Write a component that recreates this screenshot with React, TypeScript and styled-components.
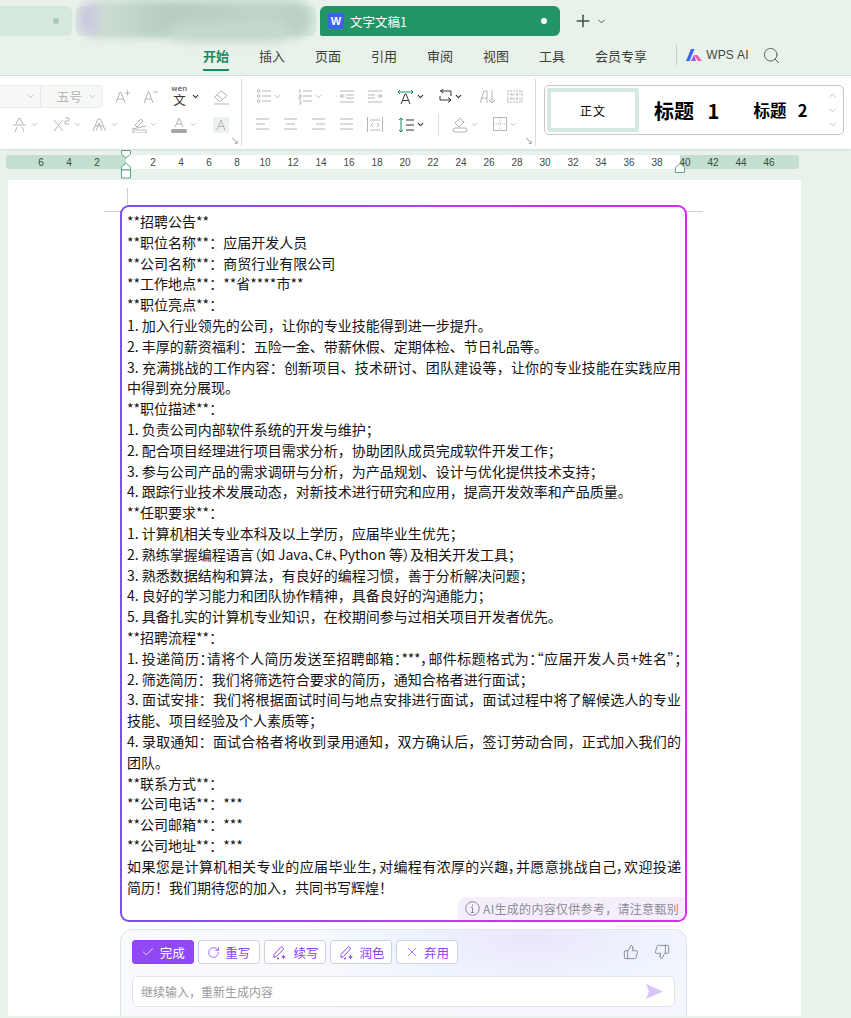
import React from 'react';
import styled, { createGlobalStyle } from 'styled-components';
import { Check, ChevronDown, ChevronUp, Plus, RotateCw, Search, ThumbsDown, ThumbsUp, X } from 'lucide-react';

const Global = createGlobalStyle`
	html, body { margin: 0; padding: 0; height: 1018px; overflow: hidden; background: #e9f2ea; }
	body { font-family: "Noto Sans CJK SC", "Noto Sans", sans-serif; }
	svg { display: block; flex: none; }
`;

const Shell = styled.div`
	width: 851px;
	height: 1018px;
	overflow: hidden;
	background: #e9f2ea;
	display: flex;
	flex-direction: column;
	& > * { flex: none; }
`;

/* tabs */
const TabBar = styled.div`
	height: 36px;
	box-sizing: border-box;
	padding-top: 6px;
	display: flex;
	align-items: stretch;
	gap: 4px;
`;
const PlainTab = styled.div<{ $w: number }>`
	width: ${p => p.$w}px;
	background: #d6e8dc;
	border-radius: 0 6px 6px 0;
	display: flex;
	align-items: center;
	justify-content: flex-end;
	padding-right: 13px;
	box-sizing: border-box;
	position: relative;
`;
const BlurTab = styled(PlainTab)`
	border-radius: 6px;
`;
const Dot = styled.span<{ $c: string }>`
	width: 6px;
	height: 6px;
	border-radius: 50%;
	background: ${p => p.$c};
`;
const Smudge = styled.div`
	position: absolute;
	left: 3px;
	top: -6px;
	width: 232px;
	height: 38px;
	border-radius: 18px;
	background: linear-gradient(90deg, #cdbfe4 0, #cbdcd2 26px, #b6cdbf 90px, #c0d4c7 180px, #bbd0c3 232px);
	filter: blur(4px);
	&::after {
		content: '';
		position: absolute;
		left: 90px;
		top: 22px;
		width: 120px;
		height: 20px;
		border-radius: 10px;
		background: #c4d8cb;
	}
`;
const ActiveTab = styled.div`
	width: 240px;
	background: #229465;
	border-radius: 6px 6px 6px 2px;
	display: flex;
	align-items: center;
	gap: 6px;
	padding: 0 13px 0 8px;
	box-sizing: border-box;
	color: #fff;
	font-size: 12.5px;
`;
const WordBadge = styled.span`
	width: 16px;
	height: 16px;
	border-radius: 2px;
	background: #3d63ee;
	color: #fff;
	font: bold 11px "Liberation Sans", sans-serif;
	display: flex;
	align-items: center;
	justify-content: center;
`;
const TabTitle = styled.span`
	flex: 1;
`;
const NewTab = styled.div`
	display: flex;
	align-items: center;
	gap: 3px;
	margin-left: 9px;
	color: #38524a;
`;

/* menu */
const MenuBar = styled.div`
	height: 39px;
	padding: 8px 0 0 203px;
	box-sizing: border-box;
	display: flex;
	align-items: flex-start;
	gap: 30px;
`;
const MenuItem = styled.div<{ $on?: boolean }>`
	font-size: 13px;
	line-height: 24px;
	height: 25px;
	color: ${p => (p.$on ? '#1c8a5f' : '#3a3f3c')};
	font-weight: ${p => (p.$on ? 700 : 400)};
	border-bottom: ${p => (p.$on ? '2px solid #1c8a5f' : '2px solid transparent')};
`;
const AiBlock = styled.div`
	display: flex;
	align-items: center;
	height: 22px;
	margin-left: -1px;
	gap: 4px;
	color: #3e4a45;
	font: 12px "Liberation Sans", sans-serif;
`;
const MenuRule = styled.span`
	width: 1px;
	height: 20px;
	background: #c5cfc9;
	margin-right: 5px;
`;
const AiText = styled.span`
	letter-spacing: 0.2px;
	margin-right: 9px;
`;

/* ribbon */
const Ribbon = styled.div`
	height: 75px;
	background: #fff;
	border-top: 1px solid #d9ded9;
	border-bottom: 1px solid #dfe3df;
	box-sizing: border-box;
	display: flex;
	box-shadow: 0 1px 2px #0000000a;
`;
const Group = styled.div<{ $w: number }>`
	width: ${p => p.$w}px;
	box-sizing: border-box;
	position: relative;
	display: flex;
	flex-direction: column;
	gap: 5px;
	padding-top: 6px;
	border-right: 1px solid #d8dad8;
	margin: 3px 0;
`;
const ToolRow = styled.div<{ $pad: number }>`
	height: 23px;
	padding-left: ${p => p.$pad}px;
	display: flex;
	align-items: center;
`;
const Tool = styled.div<{ $w: number }>`
	width: ${p => p.$w}px;
	flex: none;
	display: flex;
	align-items: center;
	gap: 2px;
	color: #b4b6b4;
`;
const WenGlyph = styled.div`
	width: 19px;
	display: flex;
	flex-direction: column;
	align-items: center;
	color: #333;
`;
const WenPinyin = styled.span`
	font: 8px/10px "Liberation Sans", sans-serif;
	letter-spacing: 0.4px;
`;
const WenChar = styled.span`
	font: 12.5px/15px "Liberation Sans", "Noto Sans CJK SC", sans-serif;
`;
const ShortRule = styled.span`
	width: 1px;
	height: 22px;
	background: #dcdedc;
	margin-right: 13px;
`;
const Launcher = styled.span`
	position: absolute;
	right: 2px;
	bottom: 1px;
	color: #777;
	font-size: 8px;
	line-height: 8px;
`;
const FontBox = styled.div`
	width: 103px;
	flex: none;
	height: 23px;
	margin-right: 12px;
	box-sizing: border-box;
	background: #f6f8f6;
	border: 1px solid #eceeec;
	border-left: none;
	border-radius: 0 4px 4px 0;
	display: flex;
	align-items: center;
	color: #aaa;
	font-size: 12.5px;
`;
const FontSplit = styled.div<{ $w: number }>`
	width: ${p => p.$w}px;
	height: 100%;
	box-sizing: border-box;
	display: flex;
	align-items: center;
	justify-content: flex-end;
	gap: 6px;
	padding-right: 5px;
	color: #b4b6b4;
	& + & { border-left: 1px solid #e6e8e6; }
`;
const Gallery = styled.div`
	margin: 9px 0 0 8px;
	width: 300px;
	height: 50px;
	box-sizing: border-box;
	border: 1px solid #c4c7c4;
	border-radius: 5px;
	padding: 2px;
	display: flex;
	align-items: center;
	position: relative;
`;
const StyleCard = styled.div`
	width: 92px;
	height: 44px;
	box-sizing: border-box;
	border: 4px solid #d4e9df;
	border-radius: 2px;
	font-size: 12px;
	letter-spacing: 1px;
	color: #000;
	display: flex;
	align-items: center;
	justify-content: center;
`;
const Heading = styled.div<{ $size: number; $ml: number }>`
	margin-left: ${p => p.$ml}px;
	font: bold ${p => p.$size}px "Noto Sans CJK SC", sans-serif;
	color: #000;
	white-space: pre;
`;
const GalleryArrows = styled.div`
	position: absolute;
	right: 5px;
	top: 4px;
	bottom: 4px;
	display: flex;
	flex-direction: column;
	justify-content: space-between;
	color: #bbb;
`;

/* ruler */
const RulerZone = styled.div`
	height: 30px;
	padding: 5px 0 0 6px;
	box-sizing: border-box;
	position: relative;
`;
const RulerTrack = styled.div`
	width: 793px;
	height: 14px;
	border-radius: 3px;
	padding-left: 21px;
	box-sizing: border-box;
	background: linear-gradient(90deg, #c3dfcf 120px, #fff 120px, #fff 674px, #c3dfcf 674px);
	display: flex;
	align-items: center;
`;
const Tick = styled.span`
	width: 28px;
	flex: none;
	text-align: center;
	font: 10px "Liberation Sans", sans-serif;
	color: #3c4a44;
`;
const Marker = styled.svg<{ $x: number; $y: number }>`
	position: absolute;
	left: ${p => p.$x}px;
	top: ${p => p.$y}px;
`;

/* page */
const PageArea = styled.div`
	height: 836px;
	margin-left: 8px;
	width: 793px;
	background: #fff;
	position: relative;
	overflow: hidden;
	padding: 25px 0 0 112px;
	box-sizing: border-box;
`;
const CropH = styled.span<{ $x: number; $w: number }>`
	position: absolute;
	left: ${p => p.$x}px;
	top: 31px;
	width: ${p => p.$w}px;
	height: 1px;
	background: #cfcfcf;
`;
const CropV = styled.span`
	position: absolute;
	left: 119px;
	top: 8px;
	width: 1px;
	height: 24px;
	background: #cfcfcf;
`;
const DocBox = styled.div`
	position: relative;
	width: 567px;
	height: 717px;
	box-sizing: border-box;
	padding: 4px 5px 0 5px;
	border: 2px solid transparent;
	border-radius: 9px;
	background: linear-gradient(#fff, #fff) padding-box, linear-gradient(90deg, #7d4ff0, #b13ff0 50%, #dc27ef) border-box;
`;
const Para = styled.div<{ $squeeze?: number; $tight?: boolean }>`
	font: 14px/20.8px "Noto Sans CJK SC", sans-serif;
	color: #141414;
	width: 554px;
	text-align: justify;
	text-align-last: ${p => (p.$squeeze ? 'justify' : 'auto')};
	letter-spacing: ${p => p.$squeeze ?? 0}px;
	font-feature-settings: ${p => (p.$tight ? '"palt"' : 'normal')};
`;
const Disclaimer = styled.div`
	position: absolute;
	right: 0;
	bottom: 0;
	height: 23px;
	padding: 0 6px 0 7px;
	display: flex;
	align-items: center;
	gap: 3px;
	background: #f5effd;
	border-radius: 8px 0 8px 0;
	color: #8b8b93;
	font-size: 12px;
	letter-spacing: 0.3px;
`;

/* ai prompt */
const Prompt = styled.div`
	width: 567px;
	height: 100px;
	margin-top: 7px;
	box-sizing: border-box;
	padding: 10px 11px;
	border: 1px solid #dfe3ea;
	border-radius: 12px;
	background: radial-gradient(ellipse 220px 70px at 410px 10px, #ece6fb, #eef4fe 60%, transparent 100%), linear-gradient(90deg, #f9fafe, #f5f6fe);
`;
const ActionRow = styled.div`
	display: flex;
	align-items: center;
	gap: 4.6px;
	height: 24px;
`;
const ActionBtn = styled.div<{ $primary?: boolean }>`
	width: 61.500px;
	height: 24px;
	box-sizing: border-box;
	border-radius: 3px;
	display: flex;
	align-items: center;
	justify-content: center;
	gap: 5px;
	font-size: 12.5px;
	color: ${p => (p.$primary ? '#fff' : '#8a43f0')};
	background: ${p => (p.$primary ? '#9149f5' : '#fff')};
	border: 1px solid ${p => (p.$primary ? '#9149f5' : '#cfd2da')};
`;
const Thumbs = styled.div`
	margin-left: auto;
	display: flex;
	gap: 15px;
	padding-right: 5px;
	color: #74777c;
`;
const InputBox = styled.div`
	margin-top: 12px;
	height: 31px;
	box-sizing: border-box;
	padding: 0 11px 0 8px;
	border: 1px solid #dfe3ea;
	border-radius: 6px;
	background: #fff;
	display: flex;
	align-items: center;
	justify-content: space-between;
	font-size: 12px;
	color: #9a9a9a;
`;

const Ico = ({ w = 16, h = 16, c = 'currentColor', children }: { w?: number; h?: number; c?: string; children: React.ReactNode }) => (
	<svg width={w} height={h} viewBox={`0 0 ${w} ${h}`} fill="none" stroke={c} strokeWidth={1}>{children}</svg>
);
const Chev = ({ dark }: { dark?: boolean }) => <ChevronDown size={9} strokeWidth={dark ? 3 : 2.2} color={dark ? '#333' : '#b4b6b4'} />;

const PenSpark = () => (
	<Ico w={17} h={15} c="#8a43f0">
		<path d="M3 9.500 9.500 2.500a1.600 1.600 0 0 1 2.400 2.200L5.500 11.500 3 12.500z" />
		<path d="M12.500 9.500l.8 1.700 1.700.8-1.700.8-.8 1.700-.8-1.700-1.700-.8 1.700-.8z" fill="#8a43f0" stroke="none" />
		<circle cx="7" cy="13.500" r="1" fill="#8a43f0" stroke="none" />
	</Ico>
);

const RULER = ['6', '4', '2', '', '2', '4', '6', '8', '10', '12', '14', '16', '18', '20', '22', '24', '26', '28', '30', '32', '34', '36', '38', '40', '42', '44', '46'];

const TEXT: { t: string; squeeze?: number; tight?: boolean }[] = [
	{ t: '**招聘公告**' },
	{ t: '**职位名称**：应届开发人员' },
	{ t: '**公司名称**：商贸行业有限公司' },
	{ t: '**工作地点**：**省****市**' },
	{ t: '**职位亮点**：' },
	{ t: '1. 加入行业领先的公司，让你的专业技能得到进一步提升。' },
	{ t: '2. 丰厚的薪资福利：五险一金、带薪休假、定期体检、节日礼品等。' },
	{ t: '3. 充满挑战的工作内容：创新项目、技术研讨、团队建设等，让你的专业技能在实践应用中得到充分展现。' },
	{ t: '**职位描述**：' },
	{ t: '1. 负责公司内部软件系统的开发与维护；' },
	{ t: '2. 配合项目经理进行项目需求分析，协助团队成员完成软件开发工作；' },
	{ t: '3. 参与公司产品的需求调研与分析，为产品规划、设计与优化提供技术支持；' },
	{ t: '4. 跟踪行业技术发展动态，对新技术进行研究和应用，提高开发效率和产品质量。' },
	{ t: '**任职要求**：' },
	{ t: '1. 计算机相关专业本科及以上学历，应届毕业生优先；' },
	{ t: '2. 熟练掌握编程语言（如 Java、C#、Python 等）及相关开发工具；', tight: true },
	{ t: '3. 熟悉数据结构和算法，有良好的编程习惯，善于分析解决问题；' },
	{ t: '4. 良好的学习能力和团队协作精神，具备良好的沟通能力；' },
	{ t: '5. 具备扎实的计算机专业知识，在校期间参与过相关项目开发者优先。' },
	{ t: '**招聘流程**：' },
	{ t: '1. 投递简历：请将个人简历发送至招聘邮箱：***，邮件标题格式为：“应届开发人员+姓名”；', squeeze: -0.2, tight: true },
	{ t: '2. 筛选简历：我们将筛选符合要求的简历，通知合格者进行面试；' },
	{ t: '3. 面试安排：我们将根据面试时间与地点安排进行面试，面试过程中将了解候选人的专业技能、项目经验及个人素质等；' },
	{ t: '4. 录取通知：面试合格者将收到录用通知，双方确认后，签订劳动合同，正式加入我们的团队。' },
	{ t: '**联系方式**：' },
	{ t: '**公司电话**：***' },
	{ t: '**公司邮箱**：***' },
	{ t: '**公司地址**：***' },
	{ t: '如果您是计算机相关专业的应届毕业生，对编程有浓厚的兴趣，并愿意挑战自己，欢迎投递', squeeze: -0.2, tight: true },
	{ t: '简历！我们期待您的加入，共同书写辉煌！' },
];

const App = () => (
	<Shell>
		<Global />
		<TabBar>
			<PlainTab $w={72}><Dot $c="#a9c9b7" /></PlainTab>
			<BlurTab $w={240}><Smudge /></BlurTab>
			<ActiveTab>
				<WordBadge>W</WordBadge>
				<TabTitle>文字文稿1</TabTitle>
				<Dot $c="#fff" />
			</ActiveTab>
			<NewTab>
				<Plus size={20} strokeWidth={1.8} />
				<ChevronDown size={11} strokeWidth={2} />
			</NewTab>
		</TabBar>
		<MenuBar>
			<MenuItem $on>开始</MenuItem>
			<MenuItem>插入</MenuItem>
			<MenuItem>页面</MenuItem>
			<MenuItem>引用</MenuItem>
			<MenuItem>审阅</MenuItem>
			<MenuItem>视图</MenuItem>
			<MenuItem>工具</MenuItem>
			<MenuItem>会员专享</MenuItem>
			<AiBlock>
				<MenuRule />
				<svg width="16" height="12" viewBox="0 0 16 12">
					<path d="M0 12 5 0h3.500L3.500 12z" fill="#3f63f5" />
					<path d="M5 12 8 6l2 6z" fill="#a04cf0" />
					<path d="M8 6h3.500L16 12h-4z" fill="#f35fa8" />
				</svg>
				<AiText>WPS AI</AiText>
				<Search size={19} strokeWidth={1.1} color="#47524d" />
			</AiBlock>
		</MenuBar>
		<Ribbon>
			<Group $w={242}>
				<ToolRow $pad={0}>
					<FontBox>
						<FontSplit $w={40}><Chev /></FontSplit>
						<FontSplit $w={63}>五号<Chev /></FontSplit>
					</FontBox>
					<Tool $w={28}><Ico><path d="M1 14 5 3h1l4 11M2.500 10h6M10 4h5M12.500 1.500v5" /></Ico></Tool>
					<Tool $w={27}><Ico><path d="M1 14 5 3h1l4 11M2.500 10h6M10 3h5" /></Ico></Tool>
					<Tool $w={43}>
						<WenGlyph>
							<WenPinyin>wén</WenPinyin>
							<WenChar>文</WenChar>
						</WenGlyph>
						<Chev dark />
					</Tool>
					<Tool $w={20}><Ico><path d="M6 12 1.500 8 8 2l6 4.500-6 5.500zM4 6l5.500 4.500M1 15h15" /></Ico></Tool>
				</ToolRow>
				<ToolRow $pad={12}>
					<Tool $w={41}><Ico><path d="M4 7 7 1h1l3 6M1 8h13M3 15l2-5M10 10l2 5" /></Ico><Chev /></Tool>
					<Tool $w={39}><Ico w={18}><path d="M1 3l9 11M10 3 1 14M12 1h4v3h-4v3h4" /></Ico><Chev /></Tool>
					<Tool $w={39}><Ico><path d="M1 14 6 2h2.500l5 12M3.500 9h7M4 14l3-8 3 8" /></Ico><Chev /></Tool>
					<Tool $w={40}><Ico><path d="M4 8l6-6 2 2-6 6zM1 12l14-3M2 13h13v3H2z" /></Ico><Chev /></Tool>
					<Tool $w={42}>
						<svg width="16" height="16" viewBox="0 0 16 16" fill="none" stroke="#b4b6b4"><path d="M4 10 8 1l4 9M5.500 7h5" /><rect x="0" y="12" width="16" height="4" rx="1.500" fill="#a6a6a6" stroke="none" /></svg>
						<Chev />
					</Tool>
					<Tool $w={16}>
						<svg width="16" height="16" viewBox="0 0 16 16" fill="#eef2ee" stroke="#b4b6b4"><rect width="16" height="16" stroke="none" /><path d="M4 13 8 3l4 10M5.500 9.500h5" fill="none" /></svg>
					</Tool>
				</ToolRow>
				<Launcher>↘</Launcher>
			</Group>
			<Group $w={294}>
				<ToolRow $pad={15}>
					<Tool $w={41}><Ico w={14}><circle cx="1.500" cy="2" r="1.300" /><circle cx="1.500" cy="7" r="1.300" /><circle cx="1.500" cy="12" r="1.300" /><path d="M5 2h9M5 7h9M5 12h9" /></Ico><Chev /></Tool>
					<Tool $w={42}><Ico w={14}><path d="M1 1h1v3M1 6h2v2H1v2h2M1 12h2v3H1M5 2h9M5 7h9M5 12h9" /></Ico><Chev /></Tool>
					<Tool $w={28}><Ico w={14}><path d="M0 2h14M6 6h8M0 7l3-2M0 7l3 2M0 7h5M6 9h8M0 13h14" /></Ico></Tool>
					<Tool $w={29}><Ico w={14}><path d="M0 2h14M0 6h7M14 7l-3-2M14 7l-3 2M9 7h5M0 9h7M0 13h14" /></Ico></Tool>
					<Tool $w={42}>
						<Ico w={17} h={16} c="#333"><path d="M4 15 8 5h1l4 10M5.500 11.500h6" /><path d="M1 3h15M1 3l2-2M1 3l2 2M16 3l-2-2M16 3l-2 2" stroke="#1c8a5f" /></Ico>
						<Chev dark />
					</Tool>
					<Tool $w={40}>
						<Ico w={13} h={15} c="#333"><path d="M12 2H1.500M1.500 2l3-2M1.500 2l3 2M12 2v5M1 7v4h11M12 11l-3 2.500M12 11l-3-2.500" /></Ico>
						<Chev dark />
					</Tool>
					<Tool $w={28}><Ico w={17}><path d="M1 14 5 2h3v12M3 9h5M13 1v13M13 14l-3-3M13 14l3-3" /></Ico></Tool>
					<Tool $w={16}><Ico w={16} h={13}><path d="M0 1h15v11H0zM0 4h15M0 9h15M5 4v5M10 4v5" strokeDasharray="2 1" /></Ico></Tool>
				</ToolRow>
				<ToolRow $pad={14}>
					<Tool $w={28}><Ico w={14}><path d="M0 2h13M0 7h9M0 12h13" /></Ico></Tool>
					<Tool $w={28}><Ico w={14}><path d="M0 2h13M2 7h9M0 12h13" /></Ico></Tool>
					<Tool $w={28}><Ico w={14}><path d="M0 2h13M4 7h9M0 12h13" /></Ico></Tool>
					<Tool $w={27}><Ico w={14}><path d="M0 2h13M0 7h13M0 12h13" /></Ico></Tool>
					<Tool $w={31}><Ico w={16}><path d="M.5 0v15M15.500 0v15M3 3h10M3 13h10M6 6 4 8l2 2M10 6l2 2-2 2" /></Ico></Tool>
					<Tool $w={40}>
						<Ico w={16} c="#333"><path d="M8 3h8M8 8h8M8 13h8" /><path d="M3 1v14M1 3l2-2 2 2M1 13l2 2 2-2" stroke="#1c8a5f" /></Ico>
						<Chev dark />
					</Tool>
					<ShortRule />
					<Tool $w={41}><Ico><path d="M3 6l5-5 4 4-5 5zM1 13a2 2 0 0 1 2-2h10a2 2 0 0 1 0 4H3a2 2 0 0 1-2-2z" /></Ico><Chev /></Tool>
					<Tool $w={30}><Ico w={14}><path d="M.5.500h13v13H.500z" /><path d="M7 1v12M1 7h12" strokeDasharray="1 1" /></Ico><Chev /></Tool>
				</ToolRow>
				<Launcher>↘</Launcher>
			</Group>
			<Gallery>
				<StyleCard>正文</StyleCard>
				<Heading $size={20} $ml={15}>标题   1</Heading>
				<Heading $size={16.5} $ml={34}>标题   2</Heading>
				<GalleryArrows>
					<ChevronUp size={11} />
					<ChevronDown size={11} />
					<ChevronDown size={11} />
				</GalleryArrows>
			</Gallery>
		</Ribbon>
		<RulerZone>
			<RulerTrack>
				{RULER.map((n, i) => <Tick key={i}>{n}</Tick>)}
			</RulerTrack>
			<Marker $x={121} $y={0} width="10" height="29" viewBox="0 0 10 29" fill="#fff" stroke="#5aa585">
				<path d="M.5.500h9V4L5 8 .5 4z" />
				<path d="M5 13l4.500 4v3h-9v-3z" />
				<path d="M.5 20h9v8h-9z" />
			</Marker>
			<Marker $x={675} $y={13} width="10" height="10" viewBox="0 0 10 10" fill="#fff" stroke="#5aa585">
				<path d="M5 .500l4.500 4v5h-9v-5z" />
			</Marker>
		</RulerZone>
		<PageArea>
			<CropV />
			<CropH $x={96} $w={24} />
			<CropH $x={679} $w={16} />
			<DocBox>
				{TEXT.map((l, i) => <Para key={i} $squeeze={l.squeeze} $tight={l.tight}>{l.t}</Para>)}
				<Disclaimer>
					<Ico w={15} h={15} c="#8b8b93"><circle cx="7.500" cy="7.500" r="6.800" /><path d="M7.500 6.500v5M7.500 3.500v1.500M6 6.500h1.500M6 11.500h3" /></Ico>
					AI生成的内容仅供参考，请注意甄别
				</Disclaimer>
			</DocBox>
			<Prompt>
				<ActionRow>
					<ActionBtn $primary><Check size={14} strokeWidth={1.3} />完成</ActionBtn>
					<ActionBtn><RotateCw size={13} strokeWidth={1.4} />重写</ActionBtn>
					<ActionBtn><PenSpark />续写</ActionBtn>
					<ActionBtn><PenSpark />润色</ActionBtn>
					<ActionBtn><X size={14} strokeWidth={1.3} />弃用</ActionBtn>
					<Thumbs>
						<ThumbsUp size={16} strokeWidth={1.2} />
						<ThumbsDown size={16} strokeWidth={1.2} />
					</Thumbs>
				</ActionRow>
				<InputBox>
					继续输入，重新生成内容
					<svg width="17" height="15" viewBox="0 0 17 15"><path d="M0 0 17 7.500 0 15l3-7.500z" fill="#dcc4fb" /></svg>
				</InputBox>
			</Prompt>
		</PageArea>
	</Shell>
);

export default App;
